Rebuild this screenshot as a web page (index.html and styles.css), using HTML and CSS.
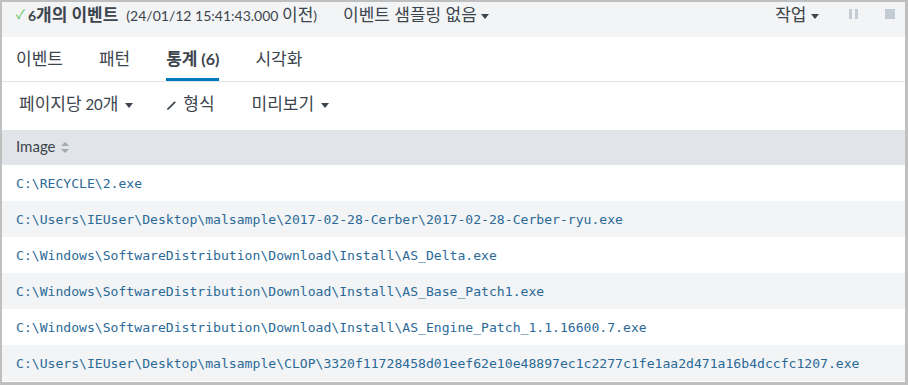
FILE: index.html
```html
<!DOCTYPE html>
<html lang="ko">
<head>
  <meta charset="UTF-8" />
  <title>통계</title>
  <link rel="stylesheet" href="styles.css">
</head>
<body>
  <div class="panel">

    <!-- Job status bar -->
    <div class="status-bar">
      <span class="check">&#10003;</span>
      <span class="count">6<span class="ko">개의 이벤트</span></span>
      <span class="time">(24/01/12 15:41:43.000 <span class="ko">이전</span>)</span>
      <span class="sampling"><span class="ko">이벤트 샘플링 없음</span> <span class="caret"></span></span>
      <span class="spacer"></span>
      <span class="job"><span class="ko">작업</span> <span class="caret"></span></span>
      <span class="pause"><i></i><i></i></span>
      <span class="stop"></span>
    </div>

    <!-- Tabs -->
    <div class="tabs">
      <span class="tab"><span class="ko">이벤트</span></span>
      <span class="tab"><span class="ko">패턴</span></span>
      <span class="tab active"><span><span class="ko">통계</span> (6)</span></span>
      <span class="tab"><span class="ko">시각화</span></span>
    </div>

    <!-- Toolbar -->
    <div class="toolbar">
      <span class="tool"><span class="ko">페이지당</span> 20<span class="ko">개</span> <span class="caret"></span></span>
      <span class="tool format"><svg class="pencil" width="11" height="11" viewBox="0 0 11 11"><path d="M1 10 L1.5 8.3 L8.6 1.2 L9.8 2.4 L2.7 9.5 Z" fill="#3c444d"/></svg><span class="ko">형식</span></span>
      <span class="tool"><span class="ko">미리보기</span> <span class="caret"></span></span>
    </div>

    <!-- Results table -->
    <table class="results">
      <thead>
        <tr>
          <th>Image <svg class="sort" width="8" height="11" viewBox="0 0 8 11"><path d="M4 0 L8 4 L0 4 Z M0 7 L8 7 L4 11 Z" fill="#a3aab1"/></svg></th>
        </tr>
      </thead>
      <tbody>
        <tr><td>C:\RECYCLE\2.exe</td></tr>
        <tr><td>C:\Users\IEUser\Desktop\malsample\2017-02-28-Cerber\2017-02-28-Cerber-ryu.exe</td></tr>
        <tr><td>C:\Windows\SoftwareDistribution\Download\Install\AS_Delta.exe</td></tr>
        <tr><td>C:\Windows\SoftwareDistribution\Download\Install\AS_Base_Patch1.exe</td></tr>
        <tr><td>C:\Windows\SoftwareDistribution\Download\Install\AS_Engine_Patch_1.1.16600.7.exe</td></tr>
        <tr><td>C:\Users\IEUser\Desktop\malsample\CLOP\3320f11728458d01eef62e10e48897ec1c2277c1fe1aa2d471a16b4dccfc1207.exe</td></tr>
      </tbody>
    </table>

  </div>
</body>
</html>
```

FILE: styles.css
```css
* {
  margin: 0;
  padding: 0;
  box-sizing: border-box;
  font-family: 'Lato', 'Noto Sans CJK KR', sans-serif;
}
body {
  background: #fff;
  color: #3c444d;
}
.ko {
  font-size: 17px;
  line-height: 1;
}
.panel {
  width: 908px;
  height: 385px;
  border-top: 2px solid #bfbfbf;
  border-left: 2px solid #bfbfbf;
  border-right: 3px solid #bfbfbf;
  border-bottom: 3px solid #bfbfbf;
  overflow: hidden;
}
/* Status bar */
.status-bar {
  display: flex;
  align-items: center;
  height: 35px;
  padding: 0 10px 11px 14px;
  background: #f2f4f5;
  font-size: 14px;
  line-height: 1;
}
.check {
  color: #5cc05c;
  font-size: 13px;
  margin-right: 3px;
}
.count {
  font-weight: bold;
  margin-right: 8px;
}
.sampling {
  margin-left: 26px;
}
.spacer {
  flex: 1;
}
.caret {
  display: inline-block;
  width: 0;
  height: 0;
  border-left: 4px solid transparent;
  border-right: 4px solid transparent;
  border-top: 5px solid #3c444d;
  vertical-align: middle;
  margin-left: 1px;
}
.job {
  margin-right: 30px;
}
.pause {
  display: flex;
  gap: 3px;
  margin-right: 27px;
}
.pause i {
  width: 3px;
  height: 10px;
  background: #c3cbd4;
}
.stop {
  width: 10px;
  height: 10px;
  background: #c3cbd4;
}
/* Tabs */
.tabs {
  display: flex;
  gap: 36px;
  height: 45px;
  padding: 0 0 0 14px;
  border-bottom: 1px solid #e1e4e8;
  font-size: 16px;
}
.tab {
  display: flex;
  align-items: center;
  padding-top: 1px;
  border-bottom: 3px solid transparent;
}
.tab.active {
  border-bottom-color: #007abd;
  font-weight: bold;
}
/* Toolbar */
.toolbar {
  display: flex;
  align-items: center;
  gap: 33px;
  height: 48px;
  padding: 0 0 5px 17px;
  font-size: 15px;
}
.tool {
  white-space: nowrap;
}
.toolbar .caret {
  margin-left: 3px;
}
.format {
  margin-right: 4px;
}
.pencil {
  margin-right: 6px;
  vertical-align: -1px;
}
/* Results */
.results {
  width: 100%;
  border-collapse: collapse;
}
.results th {
  height: 35px;
  padding: 0 0 3px 14px;
  background: #e1e4e8;
  text-align: left;
  font-weight: normal;
  font-size: 15px;
}
.sort {
  vertical-align: -1px;
  margin-left: 2px;
}
.results td {
  height: 36px;
  padding-left: 14px;
  font-family: 'DejaVu Sans Mono', monospace;
  font-size: 13.1px;
  color: #2b6a98;
  white-space: nowrap;
}
.results tbody tr:nth-child(even) td {
  background: #f2f4f5;
}
```
